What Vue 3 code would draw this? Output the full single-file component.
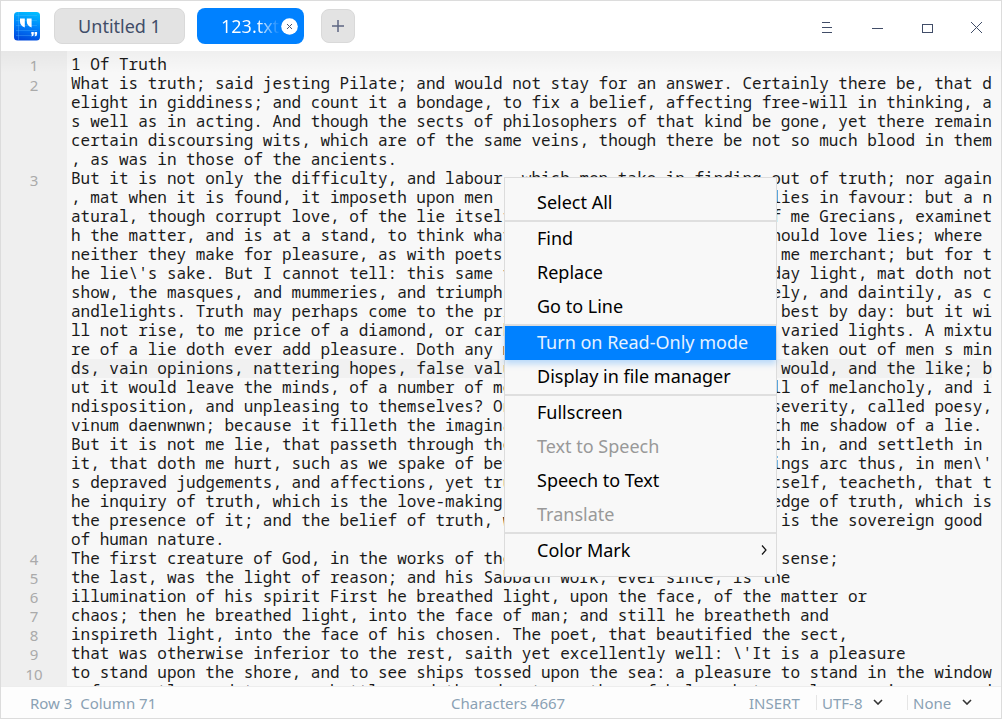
<script setup>
// Wrapped rows: `n` is the line number, `l` the text, `r` a part aligned to the last column
const rows = [
  { n: 1, l: '1 Of Truth' },
  { n: 2, l: 'What is truth; said jesting Pilate; and would not stay for an answer. Certainly there be, that d', low: true },
  { l: 'elight in giddiness; and count it a bondage, to fix a belief, affecting free-will in thinking, a' },
  { l: 's well as in acting. And though the sects of philosophers of that kind be gone, yet there remain' },
  { l: 'certain discoursing wits, which are of the same veins, though there be not so much blood in them' },
  { l: ', as was in those of the ancients.' },
  { n: 3, l: 'But it is not only the difficulty, and labour, which men take in finding out of truth; nor again', low: true },
  { l: ', mat when it is found, it imposeth upon men ', r: 'lies in favour: but a n' },
  { l: 'atural, though corrupt love, of the lie itself', r: 'f me Grecians, examinet' },
  { l: 'h the matter, and is at a stand, to think what', r: 'hould love lies; where ' },
  { l: 'neither they make for pleasure, as with poets', r: 'me merchant; but for t' },
  { l: 'he lie\\\'s sake. But I cannot tell: this same t', r: 'day light, mat doth not' },
  { l: 'show, the masques, and mummeries, and triumphs', r: 'ely, and daintily, as c' },
  { l: 'andlelights. Truth may perhaps come to the pri', r: 'best by day: but it wi' },
  { l: 'll not rise, to me price of a diamond, or carb', r: 'varied lights. A mixtu' },
  { l: 're of a lie doth ever add pleasure. Doth any m', r: 'taken out of men s min' },
  { l: 'ds, vain opinions, nattering hopes, false valu', r: 'would, and the like; b', current: true },
  { l: 'ut it would leave the minds, of a number of me', r: 'll of melancholy, and i' },
  { l: 'ndisposition, and unpleasing to themselves? On', r: 'severity, called poesy,' },
  { l: 'vinum daenwnwn; because it filleth the imagina', r: 'th me shadow of a lie. ' },
  { l: 'But it is not me lie, that passeth through the', r: 'th in, and settleth in ' },
  { l: 'it, that doth me hurt, such as we spake of bef', r: 'ings arc thus, in men\\\'' },
  { l: 's depraved judgements, and affections, yet tru', r: 'tself, teacheth, that t' },
  { l: 'he inquiry of truth, which is the love-making ', r: 'edge of truth, which is' },
  { l: 'the presence of it; and the belief of truth, w', r: 'is the sovereign good ' },
  { l: 'of human nature.' },
  { n: 4, l: 'The first creature of God, in the works of the', r: 'sense;'.padEnd(22) },
  { n: 5, l: 'the last, was the light of reason; and his Sabbath work, ever since, is the' },
  { n: 6, l: 'illumination of his spirit First he breathed light, upon the face, of the matter or' },
  { n: 7, l: 'chaos; then he breathed light, into the face of man; and still he breatheth and' },
  { n: 8, l: 'inspireth light, into the face of his chosen. The poet, that beautified the sect,' },
  { n: 9, l: 'that was otherwise inferior to the rest, saith yet excellently well: \\\'It is a pleasure' },
  { n: 10, l: 'to stand upon the shore, and to see ships tossed upon the sea: a pleasure to stand in the window', low: true },
  { l: ' of a castle, and to see a battle, and the adventures thereof below: but no pleasure is compared' },
]

const groups = [
  [{ t: 'Select All' }],
  [{ t: 'Find' }, { t: 'Replace' }, { t: 'Go to Line' }],
  [{ t: 'Turn on Read-Only mode', active: true }, { t: 'Display in file manager' }],
  [{ t: 'Fullscreen' }, { t: 'Text to Speech', off: true }, { t: 'Speech to Text' }, { t: 'Translate', off: true }],
  [{ t: 'Color Mark', sub: true }],
]
</script>

<template>
  <div class="window">
    <header class="titlebar">
      <svg class="logo" width="26" height="29" viewBox="0 0 26 29">
        <defs>
          <linearGradient id="g" x1="0.6" y1="0" x2="0.4" y2="1">
            <stop offset="0" stop-color="#00bcff" />
            <stop offset="0.5" stop-color="#0080fa" />
            <stop offset="1" stop-color="#0048dc" />
          </linearGradient>
        </defs>
        <rect width="26" height="28.500" rx="3.500" fill="url(#g)" />
        <path d="M4.500 0V28M2 3.500H23M2 8.500H23M2 13.500H23M2 18.500H23M2 23.500H23" stroke="#5cbcff" stroke-opacity=".4" stroke-width=".8" fill="none" />
        <path d="M6 6.500h4.800v9q-4.800-2-4.800-6zM12.800 6.500h4.800v9q-4.800-2-4.800-6z" fill="#fff" />
        <path d="M17.300 20h2.500v2q0 2-2.500 2.500l.8-2h-.8zM20.600 20h2.500v2q0 2-2.500 2.500l.8-2h-.8z" fill="#fff" />
      </svg>
      <div class="tab">Untitled 1</div>
      <div class="tab selected">
        <span class="name">123.txt</span>
        <svg class="close" width="17" height="17" viewBox="0 0 17 17">
          <circle cx="8.500" cy="8.500" r="8.300" fill="#fff" />
          <path d="M6 6l5 5M11 6l-5 5" stroke="#4a5672" stroke-width="1" />
        </svg>
      </div>
      <div class="add">
        <svg width="12" height="12" viewBox="0 0 12 12"><path d="M6 0V12M0 6H12" stroke="#5d6682" stroke-width="1.500" /></svg>
      </div>
      <svg class="controls" width="180" height="50" viewBox="0 0 180 50" fill="none" stroke="#414d68" shape-rendering="crispEdges">
        <path d="M11 21.500H19M11 26.500H21M11 31.500H21M61 27.500H72M111.500 23.500h10v8h-10z" />
        <path d="M160 21L171 32M171 21L160 32" shape-rendering="auto" />
      </svg>
    </header>

    <main class="editor">
      <div v-for="(r, i) in rows" :key="i" class="row">
        <span class="num" :class="{ low: r.low }">{{ r.n }}</span>
        <div class="code" :class="{ current: r.current }">
          <span>{{ r.l }}</span>
          <span v-if="r.r">{{ r.r }}</span>
        </div>
      </div>
      <div class="shade"></div>
    </main>

    <footer class="status">
      <span class="pos">Row 3&nbsp; Column 71</span>
      <span class="chars">Characters 4667</span>
      <span class="mode">INSERT</span>
      <span class="pick enc">UTF-8 <svg width="10" height="6" viewBox="0 0 10 6"><path d="M1 1l4 4 4-4" /></svg></span>
      <span class="pick lang">None <svg width="10" height="6" viewBox="0 0 10 6"><path d="M1 1l4 4 4-4" /></svg></span>
    </footer>

    <nav class="menu">
      <div v-for="(g, i) in groups" :key="i" class="group">
        <div v-for="m in g" :key="m.t" class="item" :class="{ active: m.active, off: m.off }">
          <span>{{ m.t }}</span>
          <svg v-if="m.sub" width="6" height="10" viewBox="0 0 6 10"><path d="M1 .5l4 4.500-4 4.500" fill="none" stroke="#111" stroke-width="1.200" /></svg>
        </div>
      </div>
    </nav>
  </div>
</template>

<style>
body { margin: 0; }
</style>

<style scoped>
.window {
  position: relative;
  box-sizing: border-box;
  width: 1002px;
  height: 719px;
  border: 1px solid #dcdcdc;
  background: #fff;
  display: flex;
  flex-direction: column;
  overflow: hidden;
  font-family: "Noto Sans", sans-serif;
  font-size: 18px;
}
.titlebar {
  height: 50px;
  flex: none;
  display: flex;
  align-items: center;
}
.logo { margin-left: 13px; flex: none; }
.tab {
  box-sizing: border-box;
  width: 131px;
  height: 36px;
  margin-left: 14px;
  border: 1px solid #d9d9d9;
  border-radius: 8px;
  background: #e3e3e3;
  color: #414d68;
  text-align: center;
  line-height: 34px;
}
.tab.selected {
  width: 107px;
  margin-left: 12px;
  border: 0;
  background: #0081ff;
  color: #fff;
  display: flex;
  align-items: center;
  padding-left: 24px;
}
.name {
  width: 60px;
  text-align: left;
  background: linear-gradient(90deg, #fff 36px, rgba(255, 255, 255, 0) 59px);
  background-clip: text;
  color: transparent;
}
.add {
  box-sizing: border-box;
  width: 34px;
  height: 34px;
  margin-left: 17px;
  border: 1px solid #d9d9d9;
  border-radius: 8px;
  background: #e3e3e3;
  display: flex;
  align-items: center;
  justify-content: center;
}
.controls { margin-left: auto; margin-right: 10px; }
.editor {
  position: relative;
  height: 635px;
  flex: none;
  box-sizing: border-box;
  padding-top: 4px;
  overflow: hidden;
  background: linear-gradient(90deg, #efefef 66px, #f8f8f8 66px);
}
.shade {
  position: absolute;
  inset: 0 0 auto;
  height: 22px;
  background: linear-gradient(rgba(0, 0, 0, .035), rgba(0, 0, 0, 0));
}
.row { display: flex; height: 19px; line-height: 19px; }
.num {
  width: 66px;
  margin-right: 4px;
  flex: none;
  text-align: center;
  font-size: 15px;
  color: #aaa;
  line-height: 20px;
}
.num.low { line-height: 22px; }
.code {
  display: flex;
  justify-content: space-between;
  width: 921px;
  white-space: pre;
  font-family: "Noto Sans Mono", "DejaVu Sans Mono", monospace;
  font-size: 16px;
  letter-spacing: -.008px;
  color: #1a1a1a;
}
.current { background: #f1f1f1; }
.status {
  flex: 1;
  display: flex;
  align-items: center;
  border-top: 1px solid #ededed;
  background: #fdfdfd;
  color: #8aa1b4;
  font-size: 15px;
  white-space: nowrap;
}
.pos { width: 421px; padding-left: 29px; box-sizing: border-box; margin-right: 29px; }
.chars { width: 298px; }
.mode { width: 67px; }
.pick { display: flex; align-items: center; box-sizing: border-box; height: 15px; border-left: 1px solid #e5e5e5; padding-left: 5px; }
.pick svg { margin-left: 11px; margin-bottom: 2px; fill: none; stroke: #333; stroke-width: 1.600; }
.enc { width: 91px; }
.enc svg { margin-left: 10px; }
.menu {
  position: absolute;
  left: 503px;
  top: 176px;
  box-sizing: border-box;
  width: 273px;
  height: 400px;
  padding: 8px 0;
  border: 1px solid #dcdcdc;
  background: #f8f8f8;
  color: #000;
}
.group + .group { border-top: 2px solid #dfdfdf; }
.item {
  height: 34px;
  line-height: 32px;
  padding: 0 9px 0 32px;
  display: flex;
  justify-content: space-between;
}
.item svg { margin-top: 11px; }
.active { background: #0081ff; color: #e6f2ff; box-shadow: 0 4px 6px rgba(0, 129, 255, .25); }
.off { color: #999; }
</style>
